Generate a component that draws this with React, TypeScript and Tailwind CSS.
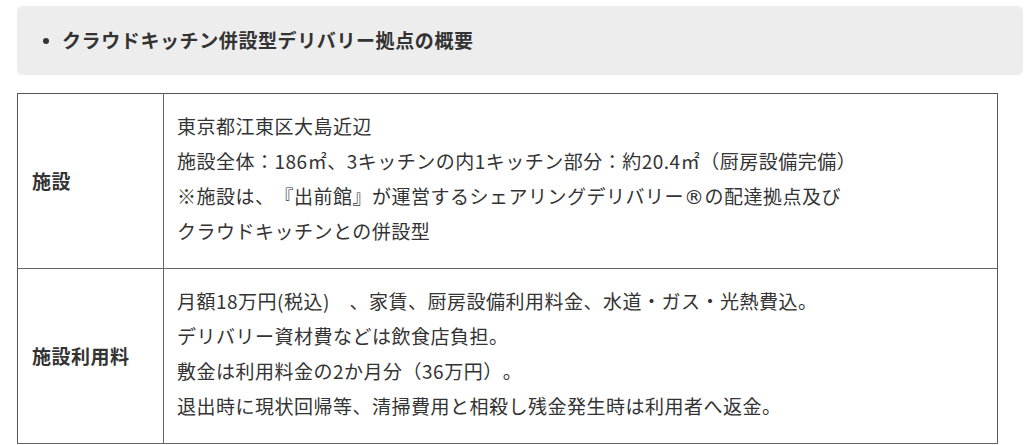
import React from "react";

interface Row {
  label: string;
  lines: React.ReactNode[];
}

const rows: Row[] = [
  {
    label: "施設",
    lines: [
      "東京都江東区大島近辺",
      "施設全体：186㎡、3キッチンの内1キッチン部分：約20.4㎡（厨房設備完備）",
      <>
        ※施設は、『出前館』が運営するシェアリングデリバリー
        <span className="font-['DejaVu_Sans'] text-[20px] leading-none">®</span>
        の配達拠点及び
      </>,
      "クラウドキッチンとの併設型",
    ],
  },
  {
    label: "施設利用料",
    lines: [
      "月額18万円(税込)　、家賃、厨房設備利用料金、水道・ガス・光熱費込。",
      "デリバリー資材費などは飲食店負担。",
      "敷金は利用料金の2か月分（36万円）。",
      "退出時に現状回帰等、清掃費用と相殺し残金発生時は利用者へ返金。",
    ],
  },
];

export default function App() {
  return (
    <div
      className="w-[1024px] h-[445px] overflow-hidden bg-white pl-[17px] pt-[6px] text-[#333] [text-spacing-trim:space-all]"
      style={{ fontFamily: '"Noto Sans CJK JP", "Noto Sans", sans-serif' }}
    >
      {/* Heading box */}
      <div className="w-[1006px] h-[69px] bg-[#ededed] rounded-[5px] flex items-center pl-[26px]">
        <span className="w-[6px] h-[6px] rounded-full bg-[#333] mr-[13px]"></span>
        <h2 className="text-[19px] font-bold tracking-[0.6px]">
          クラウドキッチン併設型デリバリー拠点の概要
        </h2>
      </div>

      {/* Table */}
      <table className="mt-[18px] w-[981px] border-collapse border border-[#555] text-[19px] tracking-[0.5px]">
        <tbody>
          {rows.map((row, i) => (
            <tr key={i} className="border-b border-[#666]">
              <th className="w-[146px] border-r border-[#666] text-left align-middle pl-[14px] font-bold">
                {row.label}
              </th>
              <td className="pl-[13px] pt-[14px] pb-[20px]">
                {row.lines.map((line, j) => (
                  <p key={j} className="h-[35px] leading-[35px] whitespace-nowrap">
                    {line}
                  </p>
                ))}
              </td>
            </tr>
          ))}
        </tbody>
      </table>
    </div>
  );
}
